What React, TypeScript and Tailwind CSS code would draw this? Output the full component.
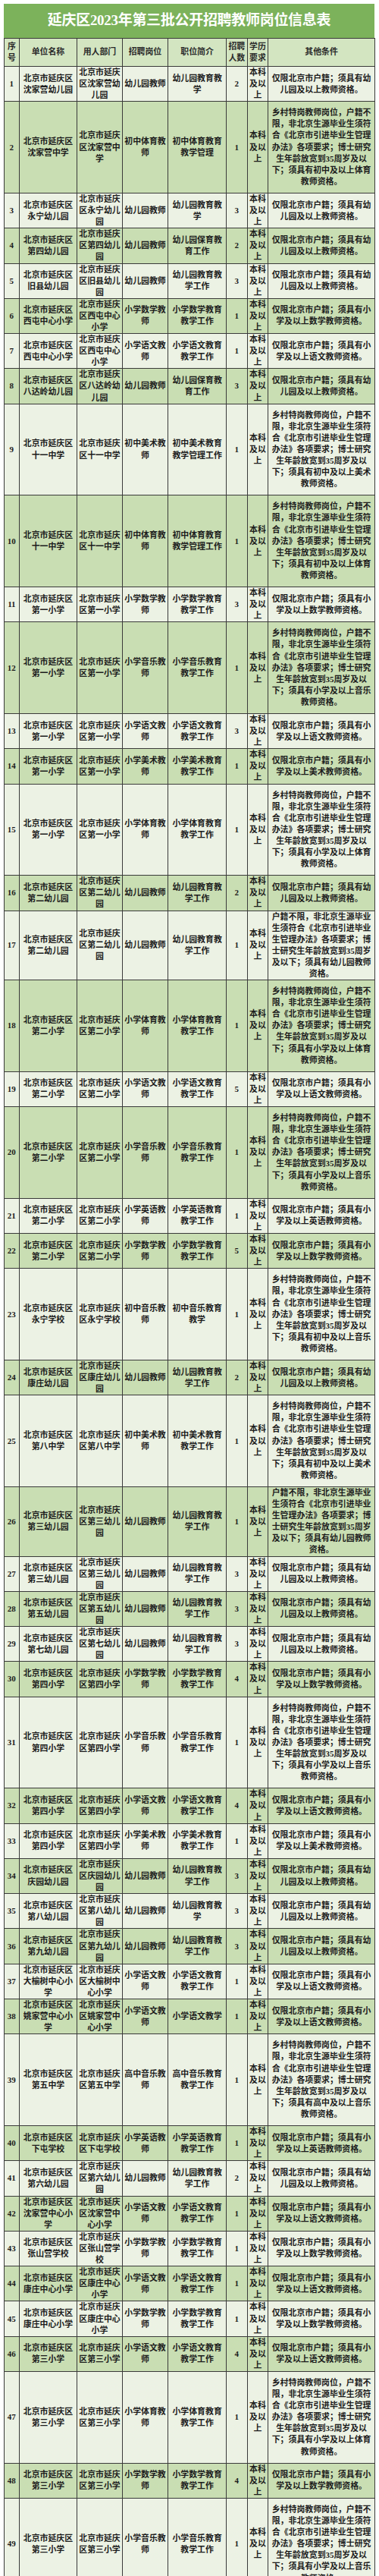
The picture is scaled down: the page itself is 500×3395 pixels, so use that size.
const chunk = (s: string, n: number) => {
  const a = Array.from(s);
  const out: string[] = [];
  for (let i = 0; i < a.length; i += n) out.push(a.slice(i, i + n).join(""));
  return out;
};

// 其他条件 variants
const K = ["仅限北京市户籍；须具有幼", "儿园及以上教师资格。"];
const S = (subj: string) => ["仅限北京市户籍；须具有小", `学及以上${subj}教师资格。`];
const L = (level: string, subj: string) => [
  "乡村特岗教师岗位，户籍不",
  "限，非北京生源毕业生须符",
  "合《北京市引进毕业生管理",
  "办法》各项要求；博士研究",
  "生年龄放宽到35周岁及以",
  `下；须具有${level}及以上${subj}`,
  "教师资格。",
];
const M = [
  "户籍不限，非北京生源毕业",
  "生须符合《北京市引进毕业",
  "生管理办法》各项要求；博",
  "士研究生年龄放宽到35周岁",
  "及以下；须具有幼儿园教师",
  "资格。",
];

type Row = [string, string, string, number, string[]];

const rows: Row[] = [
  ["沈家营幼儿园", "幼儿园教师", "幼儿园教育教学", 2, K],
  ["沈家营中学", "初中体育教师", "初中体育教育教学管理", 1, L("初中", "体育")],
  ["永宁幼儿园", "幼儿园教师", "幼儿园教育教学", 3, K],
  ["第四幼儿园", "幼儿园教师", "幼儿园保育教育工作", 2, K],
  ["旧县幼儿园", "幼儿园教师", "幼儿园教育教学工作", 3, K],
  ["西屯中心小学", "小学数学教师", "小学数学教育教学工作", 1, S("数学")],
  ["西屯中心小学", "小学语文教师", "小学语文教育教学工作", 1, S("语文")],
  ["八达岭幼儿园", "幼儿园教师", "幼儿园保育教育工作", 3, K],
  ["十一中学", "初中美术教师", "初中美术教育教学管理工作", 1, L("初中", "美术")],
  ["十一中学", "初中体育教师", "初中体育教育教学管理工作", 1, L("初中", "体育")],
  ["第一小学", "小学数学教师", "小学数学教育教学工作", 3, S("数学")],
  ["第一小学", "小学音乐教师", "小学音乐教育教学工作", 1, L("小学", "音乐")],
  ["第一小学", "小学语文教师", "小学语文教育教学工作", 3, S("语文")],
  ["第一小学", "小学美术教师", "小学美术教育教学工作", 1, S("美术")],
  ["第一小学", "小学体育教师", "小学体育教育教学工作", 1, L("小学", "体育")],
  ["第二幼儿园", "幼儿园教师", "幼儿园教育教学工作", 2, K],
  ["第二幼儿园", "幼儿园教师", "幼儿园教育教学工作", 1, M],
  ["第二小学", "小学体育教师", "小学体育教育教学工作", 1, L("小学", "体育")],
  ["第二小学", "小学语文教师", "小学语文教育教学工作", 5, S("语文")],
  ["第二小学", "小学音乐教师", "小学音乐教育教学工作", 1, L("小学", "音乐")],
  ["第二小学", "小学英语教师", "小学英语教育教学工作", 1, S("英语")],
  ["第二小学", "小学数学教师", "小学数学教育教学工作", 5, S("数学")],
  ["永宁学校", "初中音乐教师", "初中音乐教育教学", 1, L("初中", "音乐")],
  ["康庄幼儿园", "幼儿园教师", "幼儿园教育教学工作", 2, K],
  ["第八中学", "初中美术教师", "初中美术教育教学工作", 1, L("初中", "美术")],
  ["第三幼儿园", "幼儿园教师", "幼儿园教育教学工作", 1, M],
  ["第三幼儿园", "幼儿园教师", "幼儿园教育教学工作", 3, K],
  ["第五幼儿园", "幼儿园教师", "幼儿园教育教学工作", 3, K],
  ["第七幼儿园", "幼儿园教师", "幼儿园教育教学工作", 3, K],
  ["第四小学", "小学数学教师", "小学数学教育教学工作", 4, S("数学")],
  ["第四小学", "小学音乐教师", "小学音乐教育教学工作", 1, L("小学", "音乐")],
  ["第四小学", "小学语文教师", "小学语文教育教学工作", 4, S("语文")],
  ["第四小学", "小学美术教师", "小学美术教育教学工作", 1, S("美术")],
  ["庆园幼儿园", "幼儿园教师", "幼儿园教育教学工作", 3, K],
  ["第八幼儿园", "幼儿园教师", "幼儿园教育教学", 3, K],
  ["第九幼儿园", "幼儿园教师", "幼儿园教育教学工作", 3, K],
  ["大榆树中心小学", "小学语文教师", "小学语文教育教学工作", 1, S("语文")],
  ["姚家营中心小学", "小学语文教师", "小学语文教学", 1, S("语文")],
  ["第五中学", "高中音乐教师", "高中音乐教育教学工作", 1, L("高中", "音乐")],
  ["下屯学校", "小学英语教师", "小学英语教育教学工作", 1, S("英语")],
  ["第六幼儿园", "幼儿园教师", "幼儿园教育教学工作", 2, K],
  ["沈家营中心小学", "小学语文教师", "小学语文教育教学工作", 1, S("语文")],
  ["张山营学校", "小学数学教师", "小学数学教育教学工作", 1, S("数学")],
  ["康庄中心小学", "小学语文教师", "小学语文教育教学工作", 1, S("语文")],
  ["康庄中心小学", "小学数学教师", "小学数学教育教学工作", 1, S("数学")],
  ["第三小学", "小学语文教师", "小学语文教育教学工作", 4, S("语文")],
  ["第三小学", "小学体育教师", "小学体育教育教学工作", 1, L("小学", "体育")],
  ["第三小学", "小学数学教师", "小学数学教育教学工作", 4, S("数学")],
  ["第三小学", "小学音乐教师", "小学音乐教育教学工作", 1, L("小学", "音乐")],
];

const heightFor = (n: number) =>
  n >= 7 ? "h-[120.7px]" : n === 6 ? "h-[91px]" : "h-[45.6px]";

function Lines({ lines }: { lines: string[] }) {
  return (
    <>
      {lines.map((l, i) => (
        <div key={i} className="whitespace-nowrap">
          {l}
        </div>
      ))}
    </>
  );
}

const cell =
  "border border-[#3a3a3a] p-0 text-center align-middle overflow-visible";

export default function App() {
  return (
    <div className="w-[500px] bg-white pl-[5px] pt-[5px] pb-[7px] font-['Liberation_Serif','Noto_Sans_CJK_SC',sans-serif] font-bold text-[#1c1c1c]">
      <div className="flex h-[45px] w-[489px] items-center justify-center bg-[#7cb25b] text-[19px] font-bold tracking-[-0.3px] text-white">
        延庆区2023年第三批公开招聘教师岗位信息表
      </div>
      <table className="w-[489px] table-fixed border-collapse text-[10.9px] leading-[15.1px]">
        <colgroup>
          <col className="w-[19.7px]" />
          <col className="w-[76.6px]" />
          <col className="w-[59.4px]" />
          <col className="w-[60.6px]" />
          <col className="w-[76.7px]" />
          <col className="w-[27.7px]" />
          <col className="w-[27.6px]" />
          <col className="w-[140.7px]" />
        </colgroup>
        <thead>
          <tr className="h-[37px] bg-[#d3e5c1] text-[#2a2a2a]">
            <th className={cell}>
              <Lines lines={["序", "号"]} />
            </th>
            <th className={cell}>单位名称</th>
            <th className={cell}>用人部门</th>
            <th className={cell}>招聘岗位</th>
            <th className={cell}>职位简介</th>
            <th className={cell}>
              <Lines lines={["招聘", "人数"]} />
            </th>
            <th className={cell}>
              <Lines lines={["学历", "要求"]} />
            </th>
            <th className={cell}>其他条件</th>
          </tr>
        </thead>
        <tbody>
          {rows.map(([place, post, desc, count, cond], i) => {
            const full = "北京市延庆区" + place;
            return (
              <tr
                key={i}
                className={`${heightFor(cond.length)} ${
                  i % 2 === 0 ? "bg-[#ecf2e4]" : "bg-[#c9deb3]"
                }`}
              >
                <td className={`${cell} text-[11px]`}>{i + 1}</td>
                <td className={cell}>
                  <Lines lines={chunk(full, 6)} />
                </td>
                <td className={cell}>
                  <Lines lines={chunk(full, 5)} />
                </td>
                <td className={cell}>
                  <Lines lines={chunk(post, 5)} />
                </td>
                <td className={cell}>
                  <Lines lines={chunk(desc, 6)} />
                </td>
                <td className={`${cell} text-[11px]`}>{count}</td>
                <td className={cell}>
                  <Lines lines={["本科", "及以", "上"]} />
                </td>
                <td className={cell}>
                  <Lines lines={cond} />
                </td>
              </tr>
            );
          })}
        </tbody>
      </table>
    </div>
  );
}
